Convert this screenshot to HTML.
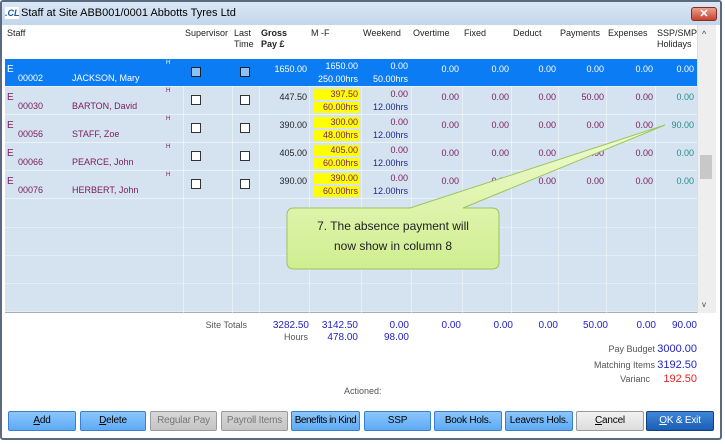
<!DOCTYPE html>
<html><head><meta charset="utf-8"><style>
*{margin:0;padding:0;box-sizing:border-box}
body{width:725px;height:444px;background:#fff;font-family:"Liberation Sans",sans-serif;font-size:9px;position:relative;overflow:hidden}
.a{position:absolute;white-space:nowrap}
.r{text-align:right}
.cb{position:absolute;width:10px;height:10px;border:1px solid #333;background:#fff}
.btn{position:absolute;top:411px;height:20px;border:1px solid #3a7fcf;border-radius:2px;background:linear-gradient(#8cc6fb,#5eaaf5);text-align:center;line-height:18px;font-size:10px;color:#000;white-space:nowrap;overflow:hidden;letter-spacing:-0.2px}
.dis{background:linear-gradient(#d8d8d8,#c4c4c4);border-color:#9a9a9a;color:#777}
</style></head><body>
<div class="a" style="left:0;top:0;width:722px;height:440px;border:2px solid #5b6a80;border-radius:3px;background:#fff"></div>
<div class="a" style="left:2px;top:2px;width:718px;height:23px;background:linear-gradient(#dbe8f6,#c3d6ec)"></div>
<div class="a" style="left:5px;top:7px;width:14px;height:12px;background:#fff;color:#1a5aa0;font-weight:bold;font-size:9px;font-style:italic;line-height:12px">.CL</div>
<div class="a" style="left:21px;top:7px;font-size:11px;color:#000">Staff at Site ABB001/0001 Abbotts Tyres Ltd</div>
<div class="a" style="left:691px;top:7px;width:26px;height:14px;border:1px solid #8a2a20;border-radius:3px;background:linear-gradient(#e9a08f,#c8432f);color:#fff;font-weight:bold;font-size:11px;text-align:center;line-height:12px">✕</div>
<div class="a" style="left:5px;top:25px;width:692px;height:288px;background:#d5e3f1;border-bottom:1px solid #aab"></div>
<div class="a" style="left:5px;top:25px;width:692px;height:34px;background:#fff"></div>
<div class="a" style="left:697px;top:25px;width:19px;height:288px;background:#eee;border-left:1px solid #ddd"></div>
<div class="a" style="left:700px;top:155px;width:12px;height:24px;background:#c8c8c8"></div>
<div class="a" style="left:702px;top:29px;font-size:9px;color:#444">&#94;</div>
<div class="a" style="left:702px;top:300px;font-size:8px;color:#444">v</div>
<div id="g"></div>
<svg class="a" style="left:0;top:0" width="725" height="444">
<defs><linearGradient id="cg" x1="0" y1="0" x2="0" y2="1"><stop offset="0" stop-color="#f0fbd2"/><stop offset="1" stop-color="#cfee8f"/></linearGradient></defs>
<path d="M294,208 L410,208 L665,125 L463,208 L492,208 Q499,208 499,215 L499,262 Q499,269 492,269 L294,269 Q287,269 287,262 L287,215 Q287,208 294,208 Z" fill="url(#cg)" stroke="#9cc45a" stroke-width="1"/>
<text x="393" y="230" font-family="Liberation Sans" font-size="12" text-anchor="middle" fill="#222">7. The absence payment will</text>
<text x="393" y="250" font-family="Liberation Sans" font-size="12" text-anchor="middle" fill="#222">now show in column 8</text>
</svg>
<div class="a r" style="right:478px;top:320px;color:#555">Site Totals</div>
<div class="a r" style="right:416px;top:320px;color:#22c;font-size:10px">3282.50</div>
<div class="a r" style="right:367px;top:320px;color:#22c;font-size:10px">3142.50</div>
<div class="a r" style="right:316px;top:320px;color:#22c;font-size:10px">0.00</div>
<div class="a r" style="right:264px;top:320px;color:#22c;font-size:10px">0.00</div>
<div class="a r" style="right:212px;top:320px;color:#22c;font-size:10px">0.00</div>
<div class="a r" style="right:167px;top:320px;color:#22c;font-size:10px">0.00</div>
<div class="a r" style="right:117px;top:320px;color:#22c;font-size:10px">50.00</div>
<div class="a r" style="right:69px;top:320px;color:#22c;font-size:10px">0.00</div>
<div class="a r" style="right:28px;top:320px;color:#22c;font-size:10px">90.00</div>
<div class="a r" style="right:417px;top:332px;color:#555">Hours</div>
<div class="a r" style="right:367px;top:332px;color:#22c;font-size:10px">478.00</div>
<div class="a r" style="right:316px;top:332px;color:#22c;font-size:10px">98.00</div>
<div class="a r" style="right:70px;top:344px;color:#555">Pay Budget</div>
<div class="a r" style="right:28px;top:343px;color:#22c;font-size:11px">3000.00</div>
<div class="a r" style="right:70px;top:360px;color:#555">Matching Items</div>
<div class="a r" style="right:28px;top:359px;color:#22c;font-size:11px">3192.50</div>
<div class="a r" style="right:75px;top:374px;color:#555">Varianc</div>
<div class="a r" style="right:28px;top:373px;color:#e22;font-size:11px">192.50</div>
<div class="a" style="left:344px;top:386px;color:#555">Actioned:</div>
<div class="btn" style="left:8px;width:68px"><u>A</u>dd</div>
<div class="btn" style="left:80px;width:66px"><u>D</u>elete</div>
<div class="btn dis" style="left:150px;width:67px">Regular Pay</div>
<div class="btn dis" style="left:221px;width:67px">Payroll Items</div>
<div class="btn" style="left:291px;width:69px;letter-spacing:-0.5px">Benefits in Kind</div>
<div class="btn" style="left:364px;width:67px">SSP</div>
<div class="btn" style="left:434px;width:68px">Book Hols.</div>
<div class="btn" style="left:505px;width:68px">Leavers Hols.</div>
<div class="btn dis" style="left:576px;width:68px;color:#000;background:linear-gradient(#f2f2f2,#dcdcdc)"><u>C</u>ancel</div>
<div class="btn" style="left:646px;width:68px;background:linear-gradient(#3f86d8,#1a5eb5);border-color:#0e3f80;color:#fff"><u>O</u>K &amp; Exit</div>
<script>
var cols=[5,183,232,259,309,361,411,462,511,558,606,655,697];
var h='';
for(var i=1;i<cols.length-1;i++){h+='<div class="a" style="left:'+cols[i]+'px;top:25px;width:1px;height:288px;background:rgba(255,255,255,0.45)"></div>';}
for(var y=227;y<313;y+=28){h+='<div class="a" style="left:5px;top:'+y+'px;width:692px;height:1px;background:rgba(255,255,255,0.35)"></div>';}
var heads=[['Staff',7],['Supervisor',185],['Last<br>Time',234],['<b>Gross<br>Pay &pound;</b>',261],['M -F',311],['Weekend',363],['Overtime',413],['Fixed',464],['Deduct',513],['Payments',560],['Expenses',608],['SSP/SMP<br>Holidays',657]];
heads.forEach(function(x){h+='<div class="a" style="left:'+x[1]+'px;top:28px;line-height:11px;color:#222">'+x[0]+'</div>';});
var rows=[['00002','JACKSON, Mary','1650.00','1650.00','250.00hrs','50.00hrs','0.00','0.00','0.00','0.00','0.00','0.00'],
['00030','BARTON, David','447.50','397.50','60.00hrs','12.00hrs','0.00','0.00','0.00','50.00','0.00','0.00'],
['00056','STAFF, Zoe','390.00','300.00','48.00hrs','12.00hrs','0.00','0.00','0.00','0.00','0.00','90.00'],
['00066','PEARCE, John','405.00','405.00','60.00hrs','12.00hrs','0.00','0.00','0.00','0.00','0.00','0.00'],
['00076','HERBERT, John','390.00','390.00','60.00hrs','12.00hrs','0.00','0.00','0.00','0.00','0.00','0.00']];
rows.forEach(function(r,k){
 var y=59+k*28,sel=k==0,c=sel?'#fff':'#7a1a5a';
 if(sel)h+='<div class="a" style="left:5px;top:'+y+'px;width:692px;height:27px;background:#0b7cf3"></div>';
 h+='<div class="a" style="left:5px;top:'+(y+27)+'px;width:692px;height:1px;background:rgba(255,255,255,0.5)"></div>';
 h+='<div class="a" style="left:7px;top:'+(y+5)+'px;color:'+c+';font-size:10px">E</div>';
 h+='<div class="a" style="left:18px;top:'+(y+14)+'px;color:'+c+'">'+r[0]+'</div>';
 h+='<div class="a" style="left:72px;top:'+(y+14)+'px;color:'+c+'">'+r[1]+'</div>';
 h+='<div class="a" style="left:166px;top:'+(y+1)+'px;color:'+c+';font-size:6px">H</div>';
 var cbs=sel?'background:#8fc0f0;border-color:#123':'';
 h+='<div class="cb" style="left:191px;top:'+(y+8)+'px;'+cbs+'"></div><div class="cb" style="left:240px;top:'+(y+8)+'px;'+cbs+'"></div>';
 h+='<div class="a r" style="right:'+(725-307)+'px;top:'+(y+5)+'px;color:'+(sel?'#fff':'#222')+'">'+r[2]+'</div>';
 if(!sel){h+='<div class="a" style="left:313px;top:'+(y+2)+'px;width:46px;height:11px;background:#ffff00"></div><div class="a" style="left:313px;top:'+(y+15)+'px;width:46px;height:11px;background:#ffff00"></div>';}
 h+='<div class="a r" style="right:'+(725-358)+'px;top:'+(y+1)+'px;line-height:13px;color:'+(sel?'#fff':'#7a1a5a')+'">'+r[3]+'<br>'+r[4]+'</div>';
 h+='<div class="a r" style="right:'+(725-408)+'px;top:'+(y+1)+'px;line-height:13px;color:'+(sel?'#fff':'#7a1a5a')+'">0.00<br><span style="color:'+(sel?'#fff':'#22288a')+'">'+r[5]+'</span></div>';
 var ends=[459,509,556,604,653,694];
 for(var j=0;j<6;j++){var cc=sel?'#fff':(j==5?'#2a8a8a':'#7a1a5a');h+='<div class="a r" style="right:'+(725-ends[j])+'px;top:'+(y+5)+'px;color:'+cc+'">'+r[6+j]+'</div>';}
});
document.getElementById('g').innerHTML=h;
</script>
</body></html>
